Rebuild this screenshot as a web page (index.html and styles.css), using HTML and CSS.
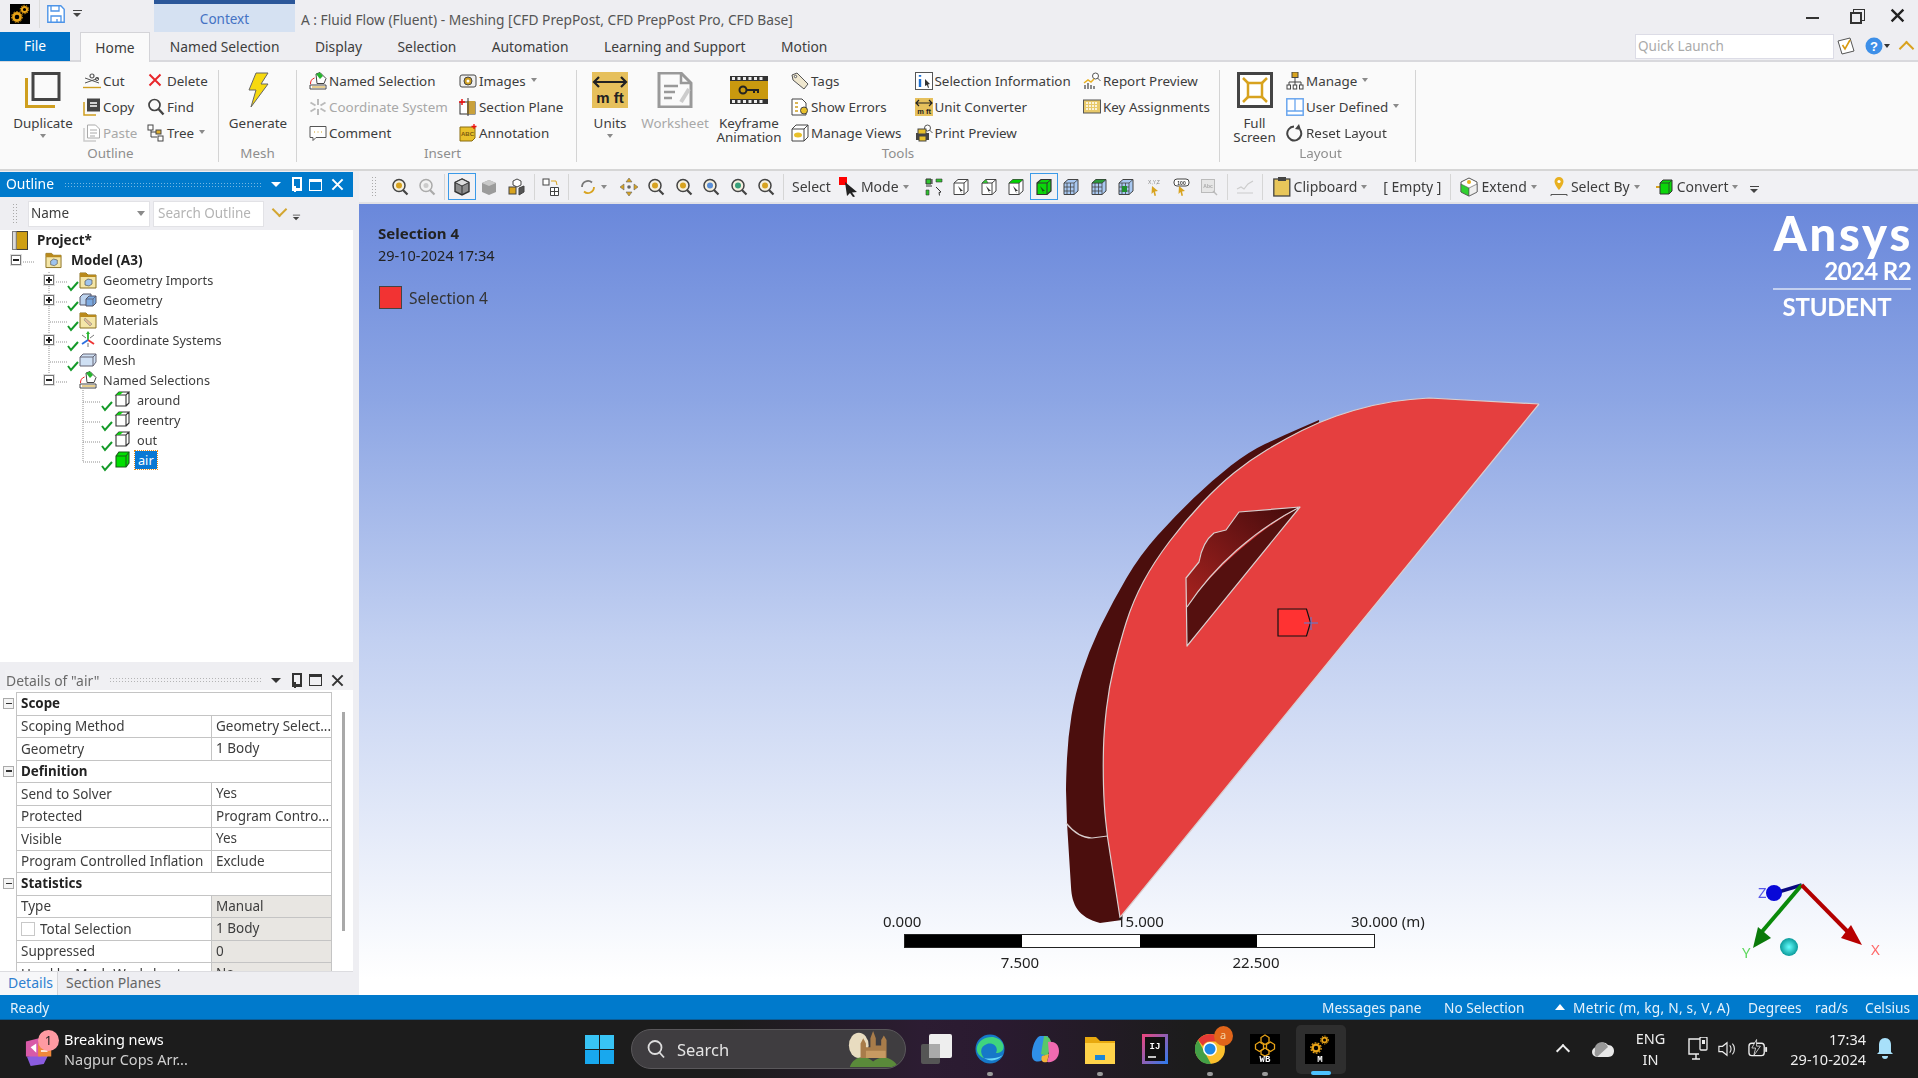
FILE: index.html
```html
<!DOCTYPE html>
<html lang="en">
<head>
<meta charset="utf-8">
<title>A : Fluid Flow (Fluent) - Meshing</title>
<link rel="stylesheet" href="styles.css">
</head>
<body>
<svg class="sprite" aria-hidden="true">
  <symbol id="xm" viewBox="0 0 14 14"><path d="M1.500 1.500l11 11M12.500 1.500l-11 11" fill="none" stroke="currentColor" stroke-width="2.200"/></symbol>
  <symbol id="gears" viewBox="0 0 20 20"><rect width="20" height="20" fill="#000"/><g fill="none" stroke="#e8a317"><circle cx="7" cy="13" r="3.600" stroke-width="2.600"/><circle cx="7" cy="13" r="5.400" stroke-width="1" stroke-dasharray="1.600 1.400"/><circle cx="14.500" cy="5.500" r="2.600" stroke-width="2"/><circle cx="14.500" cy="5.500" r="4.200" stroke-width="1" stroke-dasharray="1.400 1.200"/></g></symbol>
  <symbol id="save" viewBox="0 0 18 18"><path d="M.8.8h13l3.400 3.400v13H.8z" fill="#fff" stroke="#4d94e8" stroke-width="1.400"/><path d="M4 1v5h8V1M4 17v-6h10v6M10 14v3" fill="none" stroke="#4d94e8" stroke-width="1.300"/></symbol>
  <symbol id="dup" viewBox="0 0 36 36"><path d="M1.500 6v28.500H30" fill="none" stroke="#cf9f1f" stroke-width="3"/><rect x="8" y="1.500" width="26" height="26" fill="#fafafa" stroke="#444" stroke-width="3"/></symbol>
  <symbol id="cut" viewBox="0 0 18 18"><path d="M0 15.500h18" stroke="#cf9f1f" stroke-width="1.400"/><path d="M2 11L16 6M2 6l14 5" stroke="#555" fill="none"/><circle cx="9" cy="4" r="2" fill="none" stroke="#555" stroke-width="1.200"/><circle cx="14" cy="7" r="1.600" fill="none" stroke="#555"/></symbol>
  <symbol id="copy" viewBox="0 0 18 18"><path d="M1 4v13h12" fill="none" stroke="#cf9f1f" stroke-width="1.500"/><rect x="4" y="0.500" width="13" height="13" fill="#444"/><path d="M7 5h7M7 8h7" stroke="#fff" stroke-width="1.300"/></symbol>
  <symbol id="paste" viewBox="0 0 18 18"><path d="M1 4v13h12" fill="none" stroke="#ccc" stroke-width="1.500"/><path d="M4.500 1h8l4 4v9h-12z" fill="#fff" stroke="#aaa"/><path d="M7 6h7M7 9h7M7 12h5" stroke="#aaa"/></symbol>
  <symbol id="del" viewBox="0 0 18 18"><path d="M2.500 2.500l11 11M13.500 2.500l-11 11" stroke="#e8272b" stroke-width="2"/></symbol>
  <symbol id="find" viewBox="0 0 18 18"><circle cx="7.500" cy="7" r="5.500" fill="none" stroke="#444" stroke-width="1.700"/><path d="M11.500 11l5 5.500" stroke="#444" stroke-width="2.400"/></symbol>
  <symbol id="tree" viewBox="0 0 18 18"><path d="M4 5v8h6M4 8h6" stroke="#444" fill="none"/><rect x="1" y="1" width="5" height="5" fill="#fff" stroke="#444"/><rect x="9" y="6" width="5" height="4" fill="#e0b030" stroke="#444"/><rect x="11" y="12" width="5" height="5" fill="#fff" stroke="#444"/></symbol>
  <symbol id="bolt" viewBox="0 0 24 36"><path d="M10 1h12l-7 11h7L5 35l5-17H3z" fill="#f7d90f" stroke="#666"/></symbol>
  <symbol id="named" viewBox="0 0 18 18"><path d="M1 13h16v4H1z" fill="#fff" stroke="#444"/><path d="M3 15h13" stroke="#cf9f1f"/><path d="M7 2l4-1.500 6 6-2 5H8z" fill="#fff" stroke="#444"/><path d="M7 2l4-1.500 3 3.500-3 3z" fill="#27b52f"/><path d="M1.500 12c0-3 1-5 4-6" fill="none" stroke="#e22"/></symbol>
  <symbol id="coordg" viewBox="0 0 18 18"><g stroke="#bbb" stroke-width="2"><path d="M9 1v6M9 11v6M1.500 4.500l5 3M11.500 10.500l5 3M1.500 13.500l5-3M11.500 7.500l5-3"/></g></symbol>
  <symbol id="comment" viewBox="0 0 18 18"><path d="M1 2.500h16v11H7l-3 3v-3H1z" fill="#fff" stroke="#555"/><path d="M5 8h1M8.500 8h1M12 8h1" stroke="#cf9f1f"/></symbol>
  <symbol id="images" viewBox="0 0 18 18"><rect x="1" y="3" width="16" height="12" rx="2" fill="#eee" stroke="#444"/><circle cx="9" cy="9" r="4" fill="#cf9f1f" stroke="#444"/><circle cx="9" cy="9" r="1.500" fill="#fff"/></symbol>
  <symbol id="section" viewBox="0 0 18 18"><rect x="1" y="4" width="15" height="12" fill="#fff" stroke="#333"/><rect x="8" y="3" width="8" height="13" fill="#c9a13b"/><path d="M9 0v18" stroke="#333"/><path d="M3 1v6M0 4h6" stroke="#e11" stroke-width="1.500"/></symbol>
  <symbol id="annot" viewBox="0 0 18 18"><path d="M1 3h15v11l-3 3H1z" fill="#e8c02a" stroke="#8a6d10"/><path d="M15 0v5M12.500 2.500h5" stroke="#e11" stroke-width="1.300"/></symbol>
  <symbol id="units" viewBox="0 0 36 36"><rect width="36" height="36" fill="#e6c05c"/><path d="M2 10h32M7 5l-5 5 5 5M29 5l5 5-5 5" fill="none" stroke="#222" stroke-width="2.200"/></symbol>
  <symbol id="sheet" viewBox="0 0 36 36"><path d="M2 1h22l10 10v24H2z" fill="#fafafa" stroke="#999" stroke-width="3"/><path d="M24 1v10h10M7 14h14M7 20h11M7 26h8" fill="none" stroke="#999" stroke-width="2.500"/><path d="M24 30l8-13" stroke="#ccc" stroke-width="4"/></symbol>
  <symbol id="key" viewBox="0 0 38 28"><rect width="38" height="28" fill="#333"/><rect y="5" width="38" height="18" fill="#c9990f"/><g fill="#eee"><rect x="2" y="1" width="3" height="3"/><rect x="7.500" y="1" width="3" height="3"/><rect x="13" y="1" width="3" height="3"/><rect x="18.500" y="1" width="3" height="3"/><rect x="24" y="1" width="3" height="3"/><rect x="29.500" y="1" width="3" height="3"/><rect x="2" y="24" width="3" height="3"/><rect x="7.500" y="24" width="3" height="3"/><rect x="13" y="24" width="3" height="3"/><rect x="18.500" y="24" width="3" height="3"/><rect x="24" y="24" width="3" height="3"/><rect x="29.500" y="24" width="3" height="3"/></g><circle cx="13" cy="14" r="3.500" fill="none" stroke="#222" stroke-width="2"/><path d="M17 14h11v3M24 14v3" fill="none" stroke="#222" stroke-width="2"/></symbol>
  <symbol id="tags" viewBox="0 0 18 18"><path d="M1 3l5-2 11 11-4 5L2 8z" fill="#efe7cf" stroke="#555"/><circle cx="4.500" cy="4.500" r="1.200" fill="#fff" stroke="#555"/></symbol>
  <symbol id="errors" viewBox="0 0 18 18"><path d="M1 1h10l4 4v12H1z" fill="#fff" stroke="#444"/><path d="M4 5h3M4 9h3M4 13h3" stroke="#cf9f1f" stroke-width="1.400"/><circle cx="13" cy="12.500" r="3.500" fill="#e8c02a" stroke="#444"/></symbol>
  <symbol id="views" viewBox="0 0 18 18"><path d="M1 5l4-4h12v12l-4 4H1z" fill="#fff" stroke="#444"/><path d="M1 5h12v12M13 5l4-4" fill="none" stroke="#444"/><ellipse cx="7" cy="11" rx="4" ry="2.500" fill="#e8c02a"/></symbol>
  <symbol id="info" viewBox="0 0 18 18"><rect x=".5" y=".5" width="17" height="17" fill="#fff" stroke="#555"/><path d="M5 3v1.800M5 7v8" stroke="#1c6fd0" stroke-width="2.400"/><path d="M10 7l5 5-2 .5 1 3-1 .5-1-3-2 1z" fill="#333"/></symbol>
  <symbol id="unit" viewBox="0 0 18 18"><rect width="18" height="18" fill="#e6c05c"/><path d="M1 5h16M4 2L1 5l3 3M14 2l3 3-3 3" fill="none" stroke="#222" stroke-width="1.200"/></symbol>
  <symbol id="print" viewBox="0 0 18 18"><circle cx="12.500" cy="4" r="3" fill="#fff" stroke="#555"/><path d="M14.500 6l3 3" stroke="#555"/><rect x="1" y="9" width="13" height="7" fill="#444"/><rect x="3" y="5" width="8" height="5" fill="#e8c02a" stroke="#444"/><rect x="4" y="12" width="7" height="5" fill="#e8c02a" stroke="#444"/></symbol>
  <symbol id="report" viewBox="0 0 18 18"><circle cx="12.500" cy="4" r="3" fill="#fff" stroke="#555"/><path d="M14.500 6l3 3" stroke="#555"/><path d="M2 17v-4M5 17v-6M8 17v-4M11 17v-3" stroke="#666" stroke-width="1.500"/><path d="M1 11l4-3 3 2 3-3" fill="none" stroke="#e8b020" stroke-width="1.500"/></symbol>
  <symbol id="keys" viewBox="0 0 18 18"><rect x=".5" y="2" width="17" height="13" fill="#e8c96a" stroke="#555"/><path d="M3 5h12M3 8h12M3 11h12" stroke="#fff" stroke-width="1.500" stroke-dasharray="2 1"/></symbol>
  <symbol id="full" viewBox="0 0 36 36"><rect x="1.500" y="1.500" width="33" height="33" fill="#fff" stroke="#444" stroke-width="3"/><rect x="11" y="11" width="14" height="14" fill="none" stroke="#d8a31f" stroke-width="2.500"/><path d="M11 11L6 6M25 11l5-5M11 25l-5 5M25 25l5 5" stroke="#d8a31f" stroke-width="2.500"/></symbol>
  <symbol id="manage" viewBox="0 0 18 18"><path d="M9 5v4M3 14v-4h12v4M9 9v5" fill="none" stroke="#444"/><rect x="6" y="0" width="6" height="5.500" fill="#d8a31f" stroke="#444"/><rect x="1" y="13" width="3.500" height="4" fill="#fff" stroke="#444"/><rect x="7.200" y="13" width="3.500" height="4" fill="#fff" stroke="#444"/><rect x="13.500" y="13" width="3.500" height="4" fill="#fff" stroke="#444"/></symbol>
  <symbol id="user" viewBox="0 0 18 18"><rect x=".8" y=".8" width="16.400" height="16.400" fill="#fff" stroke="#6aa6ee" stroke-width="1.500"/><path d="M1 13h16M9 1v12" stroke="#6aa6ee" stroke-width="1.300"/></symbol>
  <symbol id="reset" viewBox="0 0 18 18"><path d="M8 2.500a7 7 0 1 0 6 3" fill="none" stroke="#444" stroke-width="2"/><path d="M13 0l2 6-6-1z" fill="#444"/></symbol>
  <symbol id="qlcheck" viewBox="0 0 18 18"><path d="M1 4l12-3 4 13-12 3z" fill="#fff" stroke="#555"/><path d="M5.500 8l2.500 4 5-9" fill="none" stroke="#d89a10" stroke-width="1.600"/></symbol>
  <symbol id="help" viewBox="0 0 18 18"><circle cx="9" cy="9" r="8.500" fill="#3d8fe8"/></symbol>

  <symbol id="mag" viewBox="0 0 18 18"><circle cx="8" cy="7.500" r="6" fill="#f5f0df" stroke="#444" stroke-width="1.500"/><circle cx="8" cy="7.500" r="3" fill="currentColor"/><path d="M12 12l4.500 4.500" stroke="#444" stroke-width="2.200"/></symbol>
  <symbol id="magg" viewBox="0 0 18 18"><circle cx="8" cy="7.500" r="6" fill="#f2f2f2" stroke="#aaa" stroke-width="1.500"/><circle cx="8" cy="7.500" r="2.500" fill="#ccc"/><path d="M12 12l4.500 4.500" stroke="#aaa" stroke-width="2.200"/></symbol>
  <symbol id="boxd" viewBox="0 0 18 18"><path d="M9 1l7 3.500v9L9 17l-7-3.500v-9z" fill="#8c8c8c" stroke="#333" stroke-width="1.400"/><path d="M2 4.500L9 8l7-3.500L9 1z" fill="#ddd" stroke="#333"/><path d="M9 8v9" stroke="#333"/></symbol>
  <symbol id="boxg" viewBox="0 0 18 18"><path d="M9 2l7 3v9l-7 3-7-3V5z" fill="#9b9b9b"/><path d="M2 5l7 3 7-3-7-3z" fill="#c9c9c9"/></symbol>
  <symbol id="multi" viewBox="0 0 18 18"><path d="M9 1l4 2v4L9 9 5 7V3z" fill="#fff" stroke="#444"/><rect x="1" y="9" width="7" height="7" fill="#d8a31f" stroke="#444"/><path d="M11 10l5-2v6l-5 3z" fill="#555" stroke="#444"/></symbol>
  <symbol id="layout" viewBox="0 0 18 18"><rect x="1" y="1" width="6" height="6" fill="#fff" stroke="#444"/><path d="M9 3h5l1 4" fill="none" stroke="#d8a31f"/><path d="M8.500 9.500h8v8h-8zM8.500 13.500h8M12.500 9.500v8" fill="#fff" stroke="#444"/></symbol>
  <symbol id="rotate" viewBox="0 0 18 18"><path d="M3 9a6 6 0 0 1 10-4.500" fill="none" stroke="#777" stroke-width="1.800"/><path d="M15 9a6 6 0 0 1-10 4.500" fill="none" stroke="#d8a31f" stroke-width="1.800"/></symbol>
  <symbol id="pan" viewBox="0 0 18 18"><g fill="#d8a31f" stroke="#666" stroke-width=".6"><path d="M9 0l3 4H6zM9 18l-3-4h6zM0 9l4-3v6zM18 9l-4 3V6z"/></g><circle cx="9" cy="9" r="1.800" fill="#666"/></symbol>
  <symbol id="points" viewBox="0 0 18 18"><path d="M1 1h5v5H1z" fill="#2fc22f" stroke="#333"/><path d="M11 1h6v3h-6zM1 12h3v5H1z" fill="#2fc22f" stroke="#333" stroke-width=".6"/><path d="M7 1v5M1 8h6M11 9l5 5-2 .5.5 3" fill="none" stroke="#333"/></symbol>
  <symbol id="cubea" viewBox="0 0 18 18"><path d="M2 5l4-3.500h10v11.500l-4 3.500H2z" fill="#fff" stroke="#444"/><path d="M2 5h10v11.500M12 5l4-3.500" fill="none" stroke="#444"/><path d="M6 8l5 5-2 0 .5 2.500" fill="#333"/></symbol>
  <symbol id="cubeb" viewBox="0 0 18 18"><use href="#cubea"/><path d="M2 5l4-3.500 2 3.500z" fill="#2fd12f" stroke="#444" stroke-width=".5"/></symbol>
  <symbol id="cubec" viewBox="0 0 18 18"><use href="#cubea"/><path d="M2 5l4-3.500h10l-4 3.500z" fill="#00d400" stroke="#444" stroke-width=".5"/></symbol>
  <symbol id="cubed" viewBox="0 0 18 18"><path d="M2 5l4-3.500h10v11.500l-4 3.500H2z" fill="#0bd60b" stroke="#333" stroke-width="1.200"/><path d="M2 5h10v11.500M12 5l4-3.500" fill="none" stroke="#333"/><path d="M5 8l5 5-2 0 .5 2.500" fill="#1a4d1a"/></symbol>
  <symbol id="cubem" viewBox="0 0 18 18"><path d="M2 5l4-3.500h10v11.500l-4 3.500H2z" fill="#a9c9f2" stroke="#444"/><path d="M2 5h10v11.500M12 5l4-3.500M5 5v12M8.500 5v12M2 9h10M2 13h10" fill="none" stroke="#444" stroke-width=".8"/></symbol>
  <symbol id="cuben" viewBox="0 0 18 18"><use href="#cubem"/><path d="M2 5l4-3.500h10l-4 3.500z" fill="#2a9a3a" stroke="#333" stroke-width=".5"/></symbol>
  <symbol id="cubeo" viewBox="0 0 18 18"><use href="#cubem"/><rect x="5" y="8" width="5" height="6" fill="#1f8f2f"/></symbol>
  <symbol id="xyz" viewBox="0 0 18 18"><path d="M7 8l6 5-3 .5 1 4-1.500 .5-1-4-2 2z" fill="#d8a31f"/></symbol>
  <symbol id="hund" viewBox="0 0 18 18"><rect x="2" y="1" width="15" height="7" rx="3" fill="#fff" stroke="#444"/><path d="M7 8l6 5-3 .5 1 4-1.500 .5-1-4-2 2z" fill="#d8a31f"/></symbol>
  <symbol id="abc" viewBox="0 0 18 18"><rect x="1.500" y="1.500" width="13" height="13" fill="#e6e6e6" stroke="#bbb"/><path d="M13 13l4 4" stroke="#bbb" stroke-width="1.500"/></symbol>
  <symbol id="chart" viewBox="0 0 18 18"><path d="M1 11l4-2 3 2 4-5 5-3M1 15h16" fill="none" stroke="#ccc" stroke-width="1.200"/></symbol>
  <symbol id="clip" viewBox="0 0 18 20"><rect x=".8" y="2" width="16" height="17" fill="#e8c65a" stroke="#444" stroke-width="1.300"/><rect x="5" y="0" width="8" height="4" fill="#444"/></symbol>
  <symbol id="cursor" viewBox="0 0 20 20"><rect x="0" y="0" width="8" height="8" fill="#f00"/><path d="M6 5l12 10-5 .5 3 4-2 .5-3-4-3 3z" fill="#222"/></symbol>
  <symbol id="extend" viewBox="0 0 18 20"><path d="M9 1l8 4v10l-8 4-8-4V5z" fill="#fff" stroke="#555"/><path d="M1 7l8 4v8l-8-4z" fill="#2fd12f" stroke="#555" stroke-width=".6"/><path d="M9 11l8-4v8l-8 4z" fill="#eee" stroke="#555" stroke-width=".6"/><circle cx="9" cy="5" r="2" fill="#e8b020"/></symbol>
  <symbol id="selby" viewBox="0 0 18 20"><path d="M9 0a4.500 4.500 0 0 1 4.500 4.500C13.500 8 9 13 9 13S4.500 8 4.500 4.500A4.500 4.500 0 0 1 9 0z" fill="#e8b020"/><circle cx="9" cy="4.500" r="1.600" fill="#fff"/><path d="M1 19v-1.500h16V19" fill="none" stroke="#555"/></symbol>
  <symbol id="conv" viewBox="0 0 18 18"><path d="M0 9h5" stroke="#d8a31f" stroke-width="2"/><path d="M4 5l3-3h9v11l-3 3H4z" fill="#0bd60b" stroke="#333"/><path d="M4 5h9v11M13 5l3-3" fill="none" stroke="#333" stroke-width=".8"/></symbol>

  <symbol id="book" viewBox="0 0 17 20"><rect x="4" y=".5" width="12.500" height="19" fill="#cf9f14" stroke="#333"/><rect x=".5" y=".5" width="4" height="19" fill="#ddd" stroke="#777"/></symbol>
  <symbol id="folder" viewBox="0 0 18 18"><path d="M1 5V2h6l2 2h8v13H1z" fill="#f4e6a8" stroke="#8a7020"/><path d="M1 2h6l2 2h8v2H1z" fill="#b98a1d"/><path d="M6 10l3-2 4 1v4l-3 2-4-1z" fill="#9fc4ee" stroke="#555" stroke-width=".7"/></symbol>
  <symbol id="foldm" viewBox="0 0 18 18"><path d="M1 5V2h6l2 2h8v13H1z" fill="#f4e6a8" stroke="#8a7020"/><path d="M1 2h6l2 2h8v2H1z" fill="#b98a1d"/><path d="M6 7l7 6-2 2-6-6z" fill="#e2bb95" stroke="#888" stroke-width=".6"/></symbol>
  <symbol id="geom" viewBox="0 0 18 16"><path d="M1 5l3-3h8v8l-3 3H1z" fill="#bcd3ee" stroke="#556"/><path d="M7 7l3-3h7v7l-3 3H7z" fill="#7ba9e0" stroke="#556"/><path d="M7 7h7v7M14 7l3-3" fill="none" stroke="#556" stroke-width=".7"/></symbol>
  <symbol id="meshi" viewBox="0 0 18 16"><path d="M1 5l3-3h13v8l-3 4H1z" fill="#cfe0f4" stroke="#667"/><path d="M1 5h13v9M14 5l3-3" fill="none" stroke="#667"/></symbol>
  <symbol id="coord" viewBox="0 0 18 18"><path d="M9 9V2" stroke="#27b52f" stroke-width="1.800"/><path d="M9 9l6 4" stroke="#e33" stroke-width="1.800"/><path d="M9 9l-6 4" stroke="#2a6fe0" stroke-width="1.800"/><path d="M3 4l4 3M15 4l-4 3M9 12v4" stroke="#777"/><path d="M9 0l2 3H7z" fill="#27b52f"/></symbol>
  <symbol id="nsel" viewBox="0 0 17 18"><path d="M3 4h10l3 -3H6zM3 4v11h10V4M13 15l3-3V1" fill="#fff" stroke="#333" stroke-width="1.100"/><path d="M3 4l3-3h4L7 4z" fill="#14c914"/></symbol>
  <symbol id="nseld" viewBox="0 0 17 18"><path d="M3 5l3-4h10v11l-3 4H3z" fill="#00e000" stroke="#1a5a1a" stroke-width="1.100"/><path d="M3 5h10v11M13 5l3-4" fill="none" stroke="#1a5a1a"/></symbol>
  <symbol id="chk" viewBox="0 0 12 20"><path d="M1 14l3 4 7-8" fill="none" stroke="#159a2a" stroke-width="2"/></symbol>

  <symbol id="news" viewBox="0 0 32 36"><path d="M2 26l24-4-6 12-14 2z" fill="#8b5ce0"/><path d="M16 2h10v16H16z" fill="#2a7de0"/><path d="M1 10l16-4v20H1z" fill="#d85aa8"/><rect x="14" y="12" width="14" height="14" fill="#f0883a"/><path d="M6 16l6-4v10z" fill="#fff"/><path d="M17 16h7M17 20h7" stroke="#fff" stroke-width="1.600"/></symbol>
  <symbol id="win" viewBox="0 0 29 29"><g fill="#38c4f5"><rect width="14" height="14"/><rect x="15" width="14" height="14"/><rect y="15" width="14" height="14" fill="#18a8ee"/><rect x="15" y="15" width="14" height="14" fill="#18a8ee"/></g></symbol>
  <symbol id="search" viewBox="0 0 20 20"><circle cx="9" cy="8.500" r="6.500" fill="none" stroke="#ddd" stroke-width="1.800"/><path d="M13.500 13.500l4.500 5" stroke="#ddd" stroke-width="1.800"/></symbol>
  <symbol id="castle" viewBox="0 0 58 40"><ellipse cx="12" cy="16" rx="11" ry="14" fill="#e8dcc0"/><path d="M2 40c4-12 18-14 26-6 6-6 20-8 28 6z" fill="#5a8a3a"/><path d="M14 30V14l3-6 3 6v4h5V8l3-8 3 8v8h6V10l3-5 3 5v20z" fill="#a87c4a"/><path d="M20 22h22v8H20z" fill="#c79a62"/></symbol>
  <symbol id="tview" viewBox="0 0 31 30"><rect y="10" width="19" height="20" rx="2" fill="#555"/><rect x="8" width="23" height="24" rx="2" fill="#eee"/><rect x="8" y="10" width="11" height="14" fill="#aaa"/></symbol>
  <symbol id="edge" viewBox="0 0 30 30"><circle cx="15" cy="15" r="14.500" fill="#1678c8"/><path d="M2 13C4 3 22-2 28 10c2 6-2 9-7 9 3-6-3-11-9-9-6 2-8 8-3 14C4 22 1 18 2 13z" fill="#3fd47e"/><path d="M9 24c6 4 14 3 19-3-6 4-15 4-19 3z" fill="#6ad8f8"/></symbol>
  <symbol id="cop" viewBox="0 0 30 30"><path d="M10 2h8l-4 22c-1 4-9 5-11 1C0 20 4 4 10 2z" fill="#2f8fe8"/><path d="M14 2c4 0 6 2 7 6l-3 14-7-2z" fill="#58c86a"/><path d="M18 8c6-1 11 2 11 9s-5 12-12 11l2-7z" fill="#f06ab0"/><path d="M12 22l7-2-2 8c-3 1-7 0-5-6z" fill="#f3b23a"/></symbol>
  <symbol id="expl" viewBox="0 0 30 30"><path d="M0 3h11l4 4h15v4H0z" fill="#e8a90f"/><path d="M0 9h30v21H0z" fill="#ffd34a"/><rect x="10" y="21" width="10" height="5" fill="#1a86d8"/></symbol>
  <symbol id="ij" viewBox="0 0 26 30"><rect width="26" height="30" fill="url(#ijg)"/><rect x="3" y="3" width="20" height="24" fill="#111"/><path d="M6 23h8" stroke="#fff" stroke-width="1.500"/></symbol>
  <linearGradient id="ijg" x1="0" y1="0" x2="1" y2="1"><stop offset="0" stop-color="#f0447a"/><stop offset="1" stop-color="#2a7cf0"/></linearGradient>
  <symbol id="chrome" viewBox="0 0 30 30"><circle cx="15" cy="15" r="15" fill="#fbc02d"/><path d="M15 0a15 15 0 0 1 13 7.500H15A7.500 7.500 0 0 0 8 12L3 6A15 15 0 0 1 15 0z" fill="#e53935"/><path d="M3 6l6.500 12L16 30A15 15 0 0 1 3 6z" fill="#43a047"/><circle cx="15" cy="15" r="7" fill="#fff"/><circle cx="15" cy="15" r="5.500" fill="#1e88e5"/></symbol>
  <symbol id="wb" viewBox="0 0 30 30"><rect width="30" height="30" fill="#000"/><g fill="none" stroke="#e8a317" stroke-width="1.300"><path d="M15 1l4 2.500v4.500l-4 2.500-4-2.500V3.500z"/><path d="M9.500 8l4 2.500V15l-4 2.500-4-2.500v-4.500z"/><path d="M20.500 8l4 2.500V15l-4 2.500-4-2.500v-4.500z"/><path d="M15 14l4 2.500V20l-4 2-4-2v-3.500z"/></g></symbol>
  <symbol id="mesh" viewBox="0 0 30 30"><rect width="30" height="30" fill="#000"/><g fill="none" stroke="#e8a317"><circle cx="11" cy="14" r="3.400" stroke-width="2.400"/><circle cx="11" cy="14" r="5.200" stroke-width="1.200" stroke-dasharray="1.800 1.400"/><circle cx="19.500" cy="6" r="2.400" stroke-width="1.800"/><circle cx="19.500" cy="6" r="4" stroke-width="1" stroke-dasharray="1.400 1.200"/></g></symbol>
  <symbol id="cloud" viewBox="0 0 24 20"><path d="M6 18a5 5 0 0 1 0-10c1-5 8-6 11-2 4 0 6 3 6 6s-2 6-6 6z" fill="#e8e8e8"/><path d="M4 12a6 6 0 0 1 13-4L6 18a5 5 0 0 1-2-6z" fill="#999"/></symbol>
  <symbol id="netw" viewBox="0 0 20 24"><path d="M12 2H1v15h10" fill="none" stroke="#eee" stroke-width="1.400"/><path d="M4 22h8M8 17v5" stroke="#eee" stroke-width="1.400"/><rect x="12" y="0" width="7" height="13" rx="1" fill="#1c1c1c" stroke="#eee" stroke-width="1.300"/><path d="M14 3h3v4h-3z" fill="#eee"/></symbol>
  <symbol id="spk" viewBox="0 0 20 20"><path d="M1 7h4l5-4v14l-5-4H1z" fill="none" stroke="#eee" stroke-width="1.300"/><path d="M13 6c2 2 2 6 0 8M16 4c3 3 3 9 0 12" fill="none" stroke="#eee" stroke-width="1.200"/></symbol>
  <symbol id="batt" viewBox="0 0 22 20"><rect x="1" y="4" width="16" height="13" rx="3" fill="none" stroke="#eee" stroke-width="1.400"/><rect x="18" y="8" width="2" height="5" fill="#eee"/><path d="M9 0L4 9h4l-2 8 7-10H9z" fill="#1c1c1c" stroke="#eee" stroke-width=".8"/></symbol>
  <symbol id="bell" viewBox="0 0 18 24"><path d="M9 1c-4 0-6 3-6 7v7l-2 2h16l-2-2V8c0-4-2-7-6-7z" fill="#a8e0fa"/><path d="M6 19h6a3 3 0 0 1-6 0z" fill="#a8e0fa"/></symbol>
</svg>

<div class="app">
  <header class="titlebar">
    <svg class="appicon"><use href="#gears"/></svg>
    <span class="tsep"></span>
    <svg class="saveicon"><use href="#save"/></svg>
    <span class="qadrop"></span>
    <div class="context">Context</div>
    <div class="title">A : Fluid Flow (Fluent) - Meshing [CFD PrepPost, CFD PrepPost Pro, CFD Base]</div>
    <div class="winctl">
      <span class="wmin"></span>
      <span class="wrest"></span>
      <svg class="wclose"><use href="#xm"/></svg>
    </div>
  </header>

  <nav class="tabs">
    <div class="tab-file">File</div>
    <div class="tab tab-on">Home</div>
    <div class="tab">Named Selection</div>
    <div class="tab">Display</div>
    <div class="tab">Selection</div>
    <div class="tab">Automation</div>
    <div class="tab">Learning and Support</div>
    <div class="tab">Motion</div>
    <div class="ql">
      <div class="ql-box">Quick Launch</div>
      <svg class="i ql-i"><use href="#qlcheck"/></svg>
      <svg class="i ql-help" viewBox="0 0 18 18"><use href="#help"/><text x="9" y="14" class="svgt13">?</text></svg>
      <span class="caret dark"></span>
      <span class="chev-up"></span>
    </div>
  </nav>

  <section class="ribbon">
    <div class="group g1">
      <div class="gbody">
        <div class="big b80"><svg class="bi"><use href="#dup"/></svg><div class="bl">Duplicate</div><span class="caret"></span></div>
        <div class="col c64">
          <div class="ri"><svg class="i"><use href="#cut"/></svg>Cut</div>
          <div class="ri"><svg class="i"><use href="#copy"/></svg>Copy</div>
          <div class="ri off"><svg class="i"><use href="#paste"/></svg>Paste</div>
        </div>
        <div class="col">
          <div class="ri"><svg class="i"><use href="#del"/></svg>Delete</div>
          <div class="ri"><svg class="i"><use href="#find"/></svg>Find</div>
          <div class="ri"><svg class="i"><use href="#tree"/></svg>Tree<span class="caret"></span></div>
        </div>
      </div>
      <div class="glabel">Outline</div>
    </div>
    <div class="group g2">
      <div class="gbody">
        <div class="big b78"><svg class="bi"><use href="#bolt"/></svg><div class="bl">Generate</div></div>
      </div>
      <div class="glabel">Mesh</div>
    </div>
    <div class="group g3">
      <div class="gbody">
        <div class="col c150">
          <div class="ri"><svg class="i"><use href="#named"/></svg>Named Selection</div>
          <div class="ri off"><svg class="i"><use href="#coordg"/></svg>Coordinate System</div>
          <div class="ri"><svg class="i"><use href="#comment"/></svg>Comment</div>
        </div>
        <div class="col">
          <div class="ri"><svg class="i"><use href="#images"/></svg>Images<span class="caret"></span></div>
          <div class="ri"><svg class="i"><use href="#section"/></svg>Section Plane</div>
          <div class="ri"><svg class="i" viewBox="0 0 18 18"><use href="#annot"/><text x="2" y="12" class="svgt5">ABC</text></svg>Annotation</div>
        </div>
      </div>
      <div class="glabel">Insert</div>
    </div>
    <div class="group g4">
      <div class="gbody">
        <div class="big b66"><svg class="bi" viewBox="0 0 36 36"><use href="#units"/><text x="18" y="31" class="svgt15">m ft</text></svg><div class="bl">Units</div><span class="caret"></span></div>
        <div class="big b64 off"><svg class="bi"><use href="#sheet"/></svg><div class="bl">Worksheet</div></div>
        <div class="big b84"><svg class="bi wide"><use href="#key"/></svg><div class="bl">Keyframe<br>Animation</div></div>
        <div class="col c123">
          <div class="ri"><svg class="i"><use href="#tags"/></svg>Tags</div>
          <div class="ri"><svg class="i"><use href="#errors"/></svg>Show Errors</div>
          <div class="ri"><svg class="i"><use href="#views"/></svg>Manage Views</div>
        </div>
        <div class="col c168">
          <div class="ri"><svg class="i"><use href="#info"/></svg>Selection Information</div>
          <div class="ri"><svg class="i" viewBox="0 0 18 18"><use href="#unit"/><text x="9" y="16" class="svgt8">m ft</text></svg>Unit Converter</div>
          <div class="ri"><svg class="i"><use href="#print"/></svg>Print Preview</div>
        </div>
        <div class="col">
          <div class="ri"><svg class="i"><use href="#report"/></svg>Report Preview</div>
          <div class="ri"><svg class="i"><use href="#keys"/></svg>Key Assignments</div>
        </div>
      </div>
      <div class="glabel">Tools</div>
    </div>
    <div class="group g5">
      <div class="gbody">
        <div class="big b65"><svg class="bi"><use href="#full"/></svg><div class="bl">Full<br>Screen</div></div>
        <div class="col col5">
          <div class="ri"><svg class="i"><use href="#manage"/></svg>Manage<span class="caret"></span></div>
          <div class="ri"><svg class="i"><use href="#user"/></svg>User Defined<span class="caret"></span></div>
          <div class="ri"><svg class="i"><use href="#reset"/></svg>Reset Layout</div>
        </div>
      </div>
      <div class="glabel gl5">Layout</div>
    </div>
  </section>

  <main class="main">
    <aside class="left">
      <div class="ph ph-blue">
        <span class="ph-t">Outline</span><span class="ph-dots"></span>
        <span class="ph-drop"></span><span class="ph-pin"></span><span class="ph-max"></span><svg class="ph-x"><use href="#xm"/></svg>
      </div>
      <div class="filter">
        <span class="grip"></span>
        <div class="fbox fname">Name<span class="caret"></span></div>
        <div class="fbox fsearch">Search Outline</div>
        <span class="chev-down"></span>
        <span class="qadrop fdrop"></span>
      </div>
      <div class="tree">
        <svg class="tlines">
          <path d="M21 32H35M49 42V152M54 52H68M54 72H68M50 92H68M54 112H68M50 132H68M54 152H68M83 160V232M83 172H100M83 192H100M83 212H100M83 232H100"/>
        </svg>
        <div class="row l0 b"><svg class="ti b16"><use href="#book"/></svg><span class="tx">Project*</span></div>
        <div class="row l1 b"><span class="exp"></span><svg class="ti mo"><use href="#folder"/></svg><span class="tx">Model (A3)</span></div>
        <div class="row l2"><span class="exp plus"></span><svg class="ck"><use href="#chk"/></svg><svg class="ti"><use href="#folder"/></svg><span class="tx">Geometry Imports</span></div>
        <div class="row l2"><span class="exp plus"></span><svg class="ck"><use href="#chk"/></svg><svg class="ti"><use href="#geom"/></svg><span class="tx">Geometry</span></div>
        <div class="row l2"><span class="exp none"></span><svg class="ck"><use href="#chk"/></svg><svg class="ti"><use href="#foldm"/></svg><span class="tx">Materials</span></div>
        <div class="row l2"><span class="exp plus"></span><svg class="ck"><use href="#chk"/></svg><svg class="ti"><use href="#coord"/></svg><span class="tx">Coordinate Systems</span></div>
        <div class="row l2"><span class="exp none"></span><svg class="ck"><use href="#chk"/></svg><svg class="ti"><use href="#meshi"/></svg><span class="tx">Mesh</span></div>
        <div class="row l2"><span class="exp"></span><span class="ck"></span><svg class="ti"><use href="#named"/></svg><span class="tx">Named Selections</span></div>
        <div class="row l3"><svg class="ck"><use href="#chk"/></svg><svg class="ti t17"><use href="#nsel"/></svg><span class="tx">around</span></div>
        <div class="row l3"><svg class="ck"><use href="#chk"/></svg><svg class="ti t17"><use href="#nsel"/></svg><span class="tx">reentry</span></div>
        <div class="row l3"><svg class="ck"><use href="#chk"/></svg><svg class="ti t17"><use href="#nsel"/></svg><span class="tx">out</span></div>
        <div class="row l3"><svg class="ck"><use href="#chk"/></svg><svg class="ti t17"><use href="#nseld"/></svg><span class="tx sel">air</span></div>
      </div>
      <div class="splitter"></div>
      <div class="ph ph-grey">
        <span class="ph-t">Details of "air"</span><span class="ph-dots"></span>
        <span class="ph-drop"></span><span class="ph-pin"></span><span class="ph-max"></span><svg class="ph-x"><use href="#xm"/></svg>
      </div>
      <div class="details">
        <div class="dt">
          <div class="dr sec"><span class="dexp"></span><div class="dc full">Scope</div></div>
          <div class="dr"><div class="dc k">Scoping Method</div><div class="dc v">Geometry Select...</div></div>
          <div class="dr"><div class="dc k">Geometry</div><div class="dc v">1 Body</div></div>
          <div class="dr sec"><span class="dexp"></span><div class="dc full">Definition</div></div>
          <div class="dr"><div class="dc k">Send to Solver</div><div class="dc v">Yes</div></div>
          <div class="dr"><div class="dc k">Protected</div><div class="dc v">Program Contro...</div></div>
          <div class="dr"><div class="dc k">Visible</div><div class="dc v">Yes</div></div>
          <div class="dr"><div class="dc k">Program Controlled Inflation</div><div class="dc v">Exclude</div></div>
          <div class="dr sec"><span class="dexp"></span><div class="dc full">Statistics</div></div>
          <div class="dr"><div class="dc k">Type</div><div class="dc v ro">Manual</div></div>
          <div class="dr"><div class="dc k"><span class="cbx"></span>Total Selection</div><div class="dc v ro">1 Body</div></div>
          <div class="dr"><div class="dc k">Suppressed</div><div class="dc v ro">0</div></div>
          <div class="dr"><div class="dc k">Used by Mesh Worksheet</div><div class="dc v ro">No</div></div>
        </div>
        <div class="scrollb"></div>
      </div>
      <div class="btabs">
        <div class="btab on">Details</div>
        <div class="btab">Section Planes</div>
      </div>
    </aside>

    <div class="right">
      <div class="toolbar">
        <span class="grip tgrip"></span>
        <span class="ic c-gold"><svg class="i"><use href="#mag"/></svg></span>
        <span class="ic"><svg class="i"><use href="#magg"/></svg></span>
        <span class="tsp"></span>
        <span class="ic on"><svg class="i"><use href="#boxd"/></svg></span>
        <span class="ic"><svg class="i"><use href="#boxg"/></svg></span>
        <span class="ic"><svg class="i"><use href="#multi"/></svg></span>
        <span class="tsp"></span>
        <span class="ic"><svg class="i"><use href="#layout"/></svg></span>
        <span class="tsp"></span>
        <span class="ic ic-s"><svg class="i"><use href="#rotate"/></svg></span><span class="caret tc"></span>
        <span class="ic"><svg class="i"><use href="#pan"/></svg></span>
        <span class="ic c-gold"><svg class="i"><use href="#mag"/></svg></span>
        <span class="ic c-gold"><svg class="i"><use href="#mag"/></svg></span>
        <span class="ic c-blue"><svg class="i"><use href="#mag"/></svg></span>
        <span class="ic c-teal"><svg class="i"><use href="#mag"/></svg></span>
        <span class="ic c-gold"><svg class="i"><use href="#mag"/></svg></span>
        <span class="tsp"></span>
        <span class="tt tselect">Select</span>
        <svg class="i cur"><use href="#cursor"/></svg>
        <span class="tt">Mode</span><span class="caret tc2"></span>
        <span class="ic ic-m"><svg class="i"><use href="#points"/></svg></span>
        <span class="ic"><svg class="i"><use href="#cubea"/></svg></span>
        <span class="ic"><svg class="i"><use href="#cubeb"/></svg></span>
        <span class="ic"><svg class="i"><use href="#cubec"/></svg></span>
        <span class="ic on"><svg class="i"><use href="#cubed"/></svg></span>
        <span class="ic"><svg class="i"><use href="#cubem"/></svg></span>
        <span class="ic"><svg class="i"><use href="#cuben"/></svg></span>
        <span class="ic"><svg class="i"><use href="#cubeo"/></svg></span>
        <span class="ic"><svg class="i" viewBox="0 0 18 18"><use href="#xyz"/><text x="9" y="6" class="svgt6g">X,Y,Z</text></svg></span>
        <span class="ic"><svg class="i" viewBox="0 0 18 18"><use href="#hund"/><text x="9.500" y="6.500" class="svgt5d">100</text></svg></span>
        <span class="ic"><svg class="i" viewBox="0 0 18 18"><use href="#abc"/><text x="8" y="10" class="svgt5g">Abc</text></svg></span>
        <span class="tsp ts4"></span>
        <span class="ic ic-c"><svg class="i"><use href="#chart"/></svg></span>
        <span class="tsp ts2"></span>
        <svg class="i clip"><use href="#clip"/></svg>
        <span class="tt">Clipboard</span><span class="caret tc2"></span>
        <span class="tt empty">[ Empty ]</span>
        <span class="tsp ts3"></span>
        <svg class="i ext"><use href="#extend"/></svg>
        <span class="tt">Extend</span><span class="caret tc2"></span>
        <svg class="i ext2"><use href="#selby"/></svg>
        <span class="tt">Select By</span><span class="caret tc2"></span>
        <svg class="i ext3"><use href="#conv"/></svg>
        <span class="tt">Convert</span><span class="caret tc2"></span>
        <span class="qadrop tdrop"></span>
      </div>

      <div class="viewport">
        <svg class="geo" viewBox="359 204 1559 790">
          <defs>
            <linearGradient id="holeg" x1="0" y1="1" x2="1" y2="0"><stop offset="0" stop-color="#a8231f"/><stop offset=".6" stop-color="#6a1414"/><stop offset="1" stop-color="#430b0b"/></linearGradient>
            <radialGradient id="sph"><stop offset="0" stop-color="#6ff"/><stop offset="1" stop-color="#0a9a9a"/></radialGradient>
          </defs>
          <path class="dark" d="M1319 420L1299.500 428.500Q1280 437 1265 444Q1250 451 1231 465.500Q1212.500 480 1193.700 498Q1175 516 1157.500 535.500Q1140 555 1126.500 578Q1113 601 1101.500 624.500Q1090 648 1082.500 671Q1075 694 1071.500 715.500Q1068 737 1067 758.500Q1066 780 1066 790L1067 823L1071 887C1072 905 1078 917 1100 923L1122 920L1150 700L1320 440z"/>
          <path class="face" d="M1539 404L1429 398L1410.300 399.500Q1391.600 401 1372.600 405.500Q1353.700 410 1336.400 416Q1319 422 1302 430.500Q1285 439 1267.500 449.500Q1250 460 1234.500 472.500Q1219 485 1202 503Q1185 521 1169.500 541.500Q1154 562 1143.500 581.500Q1133 601 1126.200 622.500Q1119.500 644 1114.200 665.500Q1109 687 1106.500 708.500Q1104 730 1103.500 748Q1103 766 1103.500 785.500Q1104 805 1105.700 821L1107.500 837L1120 917.500z"/>
          <path class="holeb" d="M1187 646L1186.500 606C1210 575 1250 535 1300 507z"/>
          <path class="holeu" d="M1186 578L1199 562C1201 550 1205 540 1214 533L1226 530L1239 512L1300 507C1255 530 1215 565 1187 607z"/>
          <path class="edge" d="M1239 512L1300 507L1187 646L1186 578L1199 562C1201 550 1205 540 1214 533L1226 530zM1298 508C1255 530 1215 565 1187 607M1066 823C1075 834 1085 838 1092 838L1107.500 836"/>
          <path class="rim" d="M1539 404L1429 398L1410.300 399.500Q1391.600 401 1372.600 405.500Q1353.700 410 1336.400 416Q1319 422 1302 430.500Q1285 439 1267.500 449.500Q1250 460 1234.500 472.500Q1219 485 1202 503Q1185 521 1169.500 541.500Q1154 562 1143.500 581.500Q1133 601 1126.200 622.500Q1119.500 644 1114.200 665.500Q1109 687 1106.500 708.500Q1104 730 1103.500 748Q1103 766 1103.500 785.500Q1104 805 1105.700 821L1107.500 837L1120 917.500L1539 404"/>
          <path class="marker" d="M1278 609H1306.500L1310.500 622.500L1306.500 636H1278z"/>
          <path class="cross" d="M1304 623H1318M1311 617V630"/>
          <g class="triad">
            <path d="M1801.700 885L1775 893" stroke="#0a0a80" stroke-width="3.500"/>
            <circle cx="1774" cy="893" r="8" fill="#0808d8"/>
            <path d="M1801.700 885L1760 934" stroke="#0a8a0a" stroke-width="4"/>
            <path d="M1753 948L1758 927L1771 938z" fill="#0a7a0a"/>
            <path d="M1801.700 885L1848 932" stroke="#b30000" stroke-width="4"/>
            <path d="M1862 945L1851 925L1841 938z" fill="#b80000"/>
            <circle cx="1789" cy="947" r="9" fill="url(#sph)"/>
            <text x="1758" y="898" class="tz">Z</text>
            <text x="1742" y="958" class="ty">Y</text>
            <text x="1871" y="955" class="tx3">X</text>
          </g>
        </svg>
        <div class="legend">
          <div class="l-title">Selection 4</div>
          <div class="l-date">29-10-2024 17:34</div>
          <div class="l-item"><span class="l-swatch"></span>Selection 4</div>
        </div>
        <div class="logo">
          <div class="logo-a">Ansys</div>
          <div class="logo-r">2024 R2</div>
          <div class="logo-s">STUDENT</div>
        </div>
        <div class="scale">
          <div class="s-top"><span>0.000</span><span>15.000</span><span>30.000 (m)</span></div>
          <div class="s-bar"><span></span><span></span><span></span><span></span></div>
          <div class="s-bot"><span>7.500</span><span>22.500</span></div>
        </div>
      </div>
    </div>
  </main>

  <footer class="status">
    <span class="st-ready">Ready</span>
    <div class="st-r">
      <span class="st1">Messages pane</span>
      <span class="st2">No Selection</span>
      <span class="st3"></span>
      <span class="st4">Metric (m, kg, N, s, V, A)</span>
      <span class="st5">Degrees</span>
      <span class="st6">rad/s</span>
      <span>Celsius</span>
    </div>
  </footer>

  <div class="taskbar">
    <div class="widget">
      <div class="w-ic"><svg class="news"><use href="#news"/></svg><span class="badge">1</span></div>
      <div class="w-tx"><div>Breaking news</div><div class="w-sub">Nagpur Cops Arr...</div></div>
    </div>
    <svg class="winl"><use href="#win"/></svg>
    <div class="pill"><svg class="p-s"><use href="#search"/></svg><span class="p-t">Search</span><svg class="p-c"><use href="#castle"/></svg></div>
    <svg class="tv"><use href="#tview"/></svg>
    <div class="apps">
      <div class="app-i dot"><svg class="ai"><use href="#edge"/></svg></div>
      <div class="app-i"><svg class="ai"><use href="#cop"/></svg></div>
      <div class="app-i dot"><svg class="ai"><use href="#expl"/></svg></div>
      <div class="app-i"><svg class="ai" viewBox="0 0 26 30"><use href="#ij"/><text x="13" y="15" class="svgt10w">IJ</text></svg></div>
      <div class="app-i dot"><svg class="ai"><use href="#chrome"/></svg><span class="a-b">a</span></div>
      <div class="app-i dot"><svg class="ai" viewBox="0 0 30 30"><use href="#wb"/><text x="15" y="28" class="svgt10w">WB</text></svg></div>
      <div class="app-i act"><svg class="ai" viewBox="0 0 30 30"><use href="#mesh"/><text x="15" y="28" class="svgt10w">M</text></svg></div>
    </div>
    <div class="tray">
      <span class="t-up"></span>
      <svg class="t-cloud"><use href="#cloud"/></svg>
      <div class="t-lang"><div>ENG</div><div>IN</div></div>
      <svg class="t-net"><use href="#netw"/></svg>
      <svg class="t-spk"><use href="#spk"/></svg>
      <svg class="t-bat"><use href="#batt"/></svg>
      <div class="t-clock"><div>17:34</div><div>29-10-2024</div></div>
      <svg class="t-bell"><use href="#bell"/></svg>
    </div>
  </div>
</div>
</body>
</html>
```

FILE: styles.css
```css
* { box-sizing: border-box; }
html, body { margin: 0; padding: 0; }
body { width: 1918px; height: 1078px; overflow: hidden; font-family: "Noto Sans", "Open Sans", sans-serif; font-size: 13.400px; color: #3d3d3d; background: #eeeef2; }
.sprite { position: absolute; width: 0; height: 0; }
.app { display: flex; flex-direction: column; height: 1078px; filter: blur(.35px); }

/* svg inner text */
.svgt5 { font: bold 6px "Liberation Sans", sans-serif; fill: #7a5a10; }
.svgt5d { font: bold 5px "Liberation Sans", sans-serif; fill: #333; text-anchor: middle; }
.svgt5g { font: bold 5px "Liberation Sans", sans-serif; fill: #aaa; text-anchor: middle; }
.svgt6g { font: 5px "Liberation Sans", sans-serif; fill: #888; text-anchor: middle; }
.svgt8 { font: bold 7.500px "Liberation Sans", sans-serif; fill: #222; text-anchor: middle; }
.svgt10w { font: bold 9px "Liberation Mono", monospace; fill: #fff; text-anchor: middle; }
.svgt13 { font: bold 13px "Liberation Sans", sans-serif; fill: #fff; text-anchor: middle; }
.svgt15 { font: bold 15px "Liberation Sans", sans-serif; fill: #222; text-anchor: middle; }

.i { width: 18px; height: 18px; flex: none; }

/* caret */
.caret { display: inline-block; width: 0; height: 0; border-top: 4px solid #8a8a8a; border-left: 3.500px solid transparent; border-right: 3.500px solid transparent; margin-left: 3px; flex: none; }
.caret.dark { border-top-color: #333; }

/* title bar */
.titlebar { height: 32px; display: flex; align-items: center; flex: none; padding-left: 10px; background: #eeeef2; }
.appicon { width: 20px; height: 20px; margin-top: -4px; }
.tsep { width: 1px; height: 28px; background: #dcdcdc; margin: 0 7px 0 9px; align-self: flex-start; }
.saveicon { width: 18px; height: 18px; margin-top: -4px; }
.qadrop { width: 9px; height: 7px; margin: -6px 0 0 8px; border-top: 1.500px solid #444; position: relative; flex: none; }
.qadrop::after { content: ""; position: absolute; left: 0; top: 2px; border-top: 4.500px solid #444; border-left: 4.500px solid transparent; border-right: 4.500px solid transparent; }
.context { width: 141px; height: 32px; margin-left: 72px; background: #d5e1f2; border-top: 4px solid #2b579a; color: #4472c4; text-align: center; line-height: 30px; font-size: 13.500px; flex: none; }
.title { margin-left: 6px; font-size: 13.750px; color: #555; white-space: nowrap; margin-top: 6px; }
.winctl { margin-left: auto; display: flex; align-items: center; height: 32px; }
.wmin { width: 13px; height: 2.500px; background: #333; margin-right: 31px; margin-top: 4px; }
.wrest { width: 12px; height: 12px; border: 2px solid #333; margin-right: 28px; margin-top: 4px; box-shadow: 3px -3px 0 -1px #eeeef2, 3px -3px 0 0 #333; }
.wclose { width: 15px; height: 15px; color: #222; margin: -1px 13px 0 0; }

/* tabs */
.tabs { height: 30px; display: flex; flex: none; align-items: stretch; background: #eeeef2; border-bottom: 2px solid #d9d9dd; font-size: 13.800px; }
.tab-file { width: 70px; background: #0072c6; color: #fff; text-align: center; line-height: 28px; height: 29px; margin-right: 10px; }
.tab { padding: 0 17.750px; line-height: 30px; color: #3d3d3d; white-space: nowrap; }
.tab-on { width: 70px; padding: 0; margin-right: 2px; text-align: center; background: #fafafa; border: 1.500px solid #d4d4d8; border-bottom: none; height: 30px; line-height: 30px; }
.ql { margin-left: auto; display: flex; align-items: center; }
.ql-box { width: 199px; height: 25px; background: #fff; border: 1.500px solid #dcdce6; color: #aaa; padding-left: 2px; line-height: 22px; font-size: 13.500px; }
.ql-i { margin: 0 10px 0 3px; }
.ql .caret { margin: 0 0 0 1px; }
.chev-up { width: 11px; height: 11px; border-left: 2.500px solid #d9a21e; border-top: 2.500px solid #d9a21e; transform: rotate(45deg); margin: 5px 6px 0 11px; }

/* ribbon */
.ribbon { height: 109px; padding-top: 8px; background: #fafafa; display: flex; flex: none; border-bottom: 2px solid #d6d6d6; }
.group { height: 92px; display: flex; flex-direction: column; border-right: 1px solid #d4d4d4; flex: none; }
.g1 { width: 219px; padding-left: 3px; }
.g2 { width: 78px; }
.g3 { width: 280px; padding-left: 12px; }
.g4 { width: 643px; }
.g5 { width: 196px; }
.gbody { flex: 1; display: flex; min-height: 0; }
.glabel { height: 16px; line-height: 14px; text-align: center; color: #8e8e8e; font-size: 13.400px; }
.gl5 { margin-left: 6px; }
.col { display: flex; flex-direction: column; margin-top: -2px; flex: none; }
.col5 { margin-left: -3px; }
.c64 { width: 64px; }
.c150 { width: 150px; }
.c123 { width: 123.500px; }
.c168 { width: 168.500px; }
.ri { height: 26.300px; display: flex; align-items: center; gap: 2px; white-space: nowrap; }
.ri .caret { margin-top: -3px; }
.off { color: #a8a8a8; }
.big { display: flex; flex-direction: column; align-items: center; flex: none; padding-top: 2px; }
.b80 { width: 80px; }
.b78 { width: 78px; }
.b66 { width: 66px; }
.b64 { width: 64px; }
.b84 { width: 84px; }
.b65 { width: 69px; }
.bi { width: 36px; height: 36px; flex: none; }
.bi.wide { width: 38px; }
.bl { margin-top: 8px; line-height: 14px; text-align: center; white-space: nowrap; }
.big .caret { margin: 4px 0 0; }

/* main area */
.main { flex: 1; display: flex; min-height: 0; }
.left { width: 359px; padding-right: 6px; display: flex; flex-direction: column; flex: none; padding-top: 1px; }
.ph { height: 25px; display: flex; align-items: center; padding-left: 6px; flex: none; }
.ph-blue { background: #007acc; color: #fff; }
.ph-blue .ph-t { margin-top: -2px; }
.ph-grey { height: 20px; background: #f0f0f3; color: #6a6a6a; margin-left: 5px; padding-left: 1px; }
.ph-t { font-size: 13.900px; white-space: nowrap; }
.ph-dots { flex: 1; height: 6px; margin: 0 10px; background-image: radial-gradient(currentColor .6px, transparent .7px); background-size: 3px 3px; opacity: .45; }
.ph-drop { border-top: 5px solid currentColor; border-left: 5px solid transparent; border-right: 5px solid transparent; margin-right: 10px; flex: none; }
.ph-grey .ph-drop { border-top-color: #333; }
.ph-pin { width: 8px; height: 15px; margin-right: 10px; position: relative; flex: none; }
.ph-pin::before { content: ""; position: absolute; left: 1px; top: 0; width: 6px; height: 9px; border: 2px solid currentColor; border-bottom-width: 3px; }
.ph-pin::after { content: ""; position: absolute; left: 3px; top: 9px; width: 2px; height: 6px; background: currentColor; }
.ph-max { width: 13px; height: 12px; border: 1.800px solid currentColor; border-top-width: 3px; margin-right: 9px; flex: none; }
.ph-x { width: 13px; height: 13px; margin-right: 9px; flex: none; color: #fff; }
.ph-grey .ph-pin, .ph-grey .ph-max, .ph-grey .ph-x { color: #333; }

.filter { height: 33px; display: flex; align-items: center; flex: none; background: #eeeef2; }
.grip { width: 6px; height: 22px; background-image: radial-gradient(#aaa .7px, transparent .8px); background-size: 3px 3px; flex: none; }
.filter .grip { margin: 0 10px 0 12px; }
.fbox { height: 26px; background: #fff; line-height: 25px; font-size: 13.500px; border: 1px solid #e2e2e6; padding-left: 2px; display: flex; align-items: center; }
.fname { width: 122px; margin-right: 3px; }
.fname .caret { margin-left: auto; margin-right: 4px; border-top-width: 5px; border-left-width: 4.500px; border-right-width: 4.500px; }
.fsearch { width: 111px; color: #b4b4b4; padding-left: 4px; }
.chev-down { width: 11px; height: 11px; border-right: 2.500px solid #d3a632; border-bottom: 2.500px solid #d3a632; transform: rotate(45deg); margin: -8px 0 0 10px; }
.fdrop { margin: 8px 0 0 7px; transform: scale(.8); }

.tree { flex: 1; background: #fff; position: relative; min-height: 0; }
.tlines { position: absolute; left: 0; top: 0; width: 353px; height: 260px; fill: none; stroke: #8f8f8f; stroke-dasharray: 1 1; }
.row { height: 20px; display: flex; align-items: center; position: relative; white-space: nowrap; }
.b .tx { font-weight: 700; color: #222; font-size: 13.500px; }
.l0 { padding-left: 12px; }
.l1 { padding-left: 11px; }
.l2 { padding-left: 44px; }
.l3 { padding-left: 101px; }
.exp { width: 10px; height: 10px; border: 1px solid #777; background: #fff; position: relative; flex: none; box-shadow: 0 0 0 1px #ddd; }
.exp::before { content: ""; position: absolute; left: 1px; top: 3px; width: 6px; height: 2px; background: #222; }
.exp.plus::after { content: ""; position: absolute; left: 3px; top: 1px; width: 2px; height: 6px; background: #222; }
.exp.none { visibility: hidden; }
.ti { width: 18px; height: 18px; flex: none; }
.ti.b16 { width: 16px; height: 19px; }
.ti.mo { margin-left: 24px; width: 17px; }
.ti.t17 { width: 17px; }
.ck { width: 12px; height: 20px; flex: none; margin-left: 13px; margin-top: 4px; }
.l3 .ck { margin-left: 0; }
.tx { margin-left: 6px; font-size: 12.700px; }
.l0 .tx { margin-left: 9px; }
.l1 .tx { margin-left: 9px; }
.l3 .tx { margin-left: 7px; }
.tx.sel { background: #0a78d4; color: #fff; outline: 1px dotted #e98a15; padding: 0 3px; margin-left: 5px; line-height: 18px; }

.splitter { height: 8px; background: #eeeef2; flex: none; }

.details { height: 281px; background: #fff; position: relative; overflow: hidden; flex: none; }
.dt { width: 332px; padding-top: 2px; display: grid; grid-auto-rows: 22.500px; }
.dr { display: flex; margin-left: 17px; position: relative; }
.dc { border: 1px solid #c4c4c4; margin: 0 0 -1px -1px; padding-left: 4px; line-height: 20px; white-space: nowrap; overflow: hidden; font-size: 13.500px; color: #3d3d3d; }
.dc.k { width: 196px; display: flex; align-items: center; }
.dc.v { flex: 1; padding-left: 4px; }
.dc.ro { background: #e8e6e2; }
.dc.full { flex: 1; font-weight: 700; color: #222; font-size: 13.400px; }
.dexp { position: absolute; left: -14px; top: 6px; width: 11px; height: 11px; background: #f4f4f4; border: 1px solid #aaa; }
.dexp::before { content: ""; position: absolute; left: 1.500px; top: 3.500px; width: 6px; height: 1.500px; background: #333; }
.cbx { width: 14px; height: 14px; border: 1px solid #c8c8c8; margin-right: 5px; flex: none; }
.scrollb { position: absolute; left: 342px; top: 22px; width: 3px; height: 219px; background: #a9a9a9; }
.btabs { height: 24px; background: #eeeef2; display: flex; flex: none; border-top: 1px solid #dcdce0; font-size: 14px; position: relative; }
.btab { padding: 0 8px; line-height: 22px; color: #666; }
.btab.on { width: 58px; background: #f7f7f9; color: #2f7fd0; border-right: 1px solid #d4d4d8; }

.right { flex: 1; display: flex; flex-direction: column; min-width: 0; }
.toolbar { height: 33px; display: flex; align-items: center; padding-left: 12px; background: #f1f1f4; border-bottom: 2px solid #e2e2e6; flex: none; white-space: nowrap; }
.tgrip { margin-right: 9px; }
.ic { width: 27.500px; height: 27px; display: flex; align-items: center; justify-content: center; flex: none; }
.ic.on { border: 1.500px solid #3b9ae8; }
.c-gold { color: #d8a31f; }
.c-blue { color: #5a8fd8; }
.c-teal { color: #3aa07a; }
.ic-s { margin-left: 2px; width: 27px; }
.ic-m { margin-left: 11.500px; }
.ic-c { width: 30px; }
.tc { margin: 0 8px 0 0; }
.tc2 { margin: 0 0 0 4px; }
.tsp { width: 1px; height: 26px; background: #d6d6d6; margin: 0 3px; flex: none; }
.ts2 { margin: 0 2px 0 2px; }
.ts3 { margin: 0 9px 0 9px; }
.ts4 { margin: 0 2px 0 4px; }
.tt { font-size: 14px; color: #3d3d3d; }
.tselect { margin: 0 8px 0 5px; }
.cur { width: 20px; height: 20px; margin-right: 2px; }
.clip { height: 20px; margin: 0 3px 0 8px; }
.empty { margin-left: 16px; }
.ext { height: 20px; margin: 0 3px 0 0; }
.ext2 { height: 20px; margin: 0 3px 0 13px; }
.ext3 { height: 20px; margin: 0 3px 0 16px; }
.tdrop { margin: 6px 0 0 12px; }

.viewport { flex: 1; position: relative; background: linear-gradient(#6a88db 0%, #8da6e4 25%, #c2d0f1 55%, #fff 98%); overflow: hidden; min-height: 0; }
.geo { position: absolute; left: 0; top: 0; width: 1559px; height: 790px; }
.dark { fill: #4b0e0d; }
.face { fill: #e53f3f; }
.holeb { fill: #55100f; }
.holeu { fill: url(#holeg); }
.edge, .rim { fill: none; stroke: #d9cfcf; stroke-width: 1.200px; stroke-linejoin: round; }
.marker { fill: #ff3232; stroke: #111; stroke-width: 1.200px; }
.cross { stroke: #5a80d8; fill: none; }
.triad { fill: none; }
.tz { font: 15px "Noto Sans", sans-serif; fill: #5a5ae8; }
.ty { font: 15px "Noto Sans", sans-serif; fill: #5fd85f; }
.tx3 { font: 15px "Noto Sans", sans-serif; fill: #ff6a6a; }

.legend { position: absolute; left: 19px; top: 18px; color: #222; }
.l-title { font-weight: 700; font-size: 15px; line-height: 22px; }
.l-date { font-size: 14.500px; line-height: 22px; }
.l-item { display: flex; align-items: center; margin-top: 20px; font-size: 15.500px; color: #333; }
.l-swatch { width: 23px; height: 23px; background: #f23333; border: 1px solid #444; margin: 0 7px 0 1px; }

.logo { position: absolute; right: 7px; top: 4px; width: 138px; color: #fff; text-align: right; font-family: Lato, sans-serif; font-weight: 700; }
.logo-a { font-size: 47px; line-height: 50px; font-weight: 900; white-space: nowrap; letter-spacing: 2.800px; margin-right: -2px; }
.logo-r { font-size: 24px; line-height: 26px; letter-spacing: -.6px; padding-bottom: 4px; border-bottom: 2px solid #c3d0f0; }
.logo-s { font-size: 24px; line-height: 34px; text-align: center; letter-spacing: -.2px; padding-right: 10px; }

.scale { position: absolute; left: 545px; top: 707px; width: 471px; font-size: 15px; color: #222; }
.s-top { position: relative; height: 23px; }
.s-top span { position: absolute; top: 0; white-space: nowrap; }
.s-top span:nth-child(1) { left: -21px; }
.s-top span:nth-child(2) { left: 213px; }
.s-top span:nth-child(3) { left: 447px; }
.s-bar { display: flex; height: 14px; border: 1px solid #222; }
.s-bar span { flex: 1; background: #000; }
.s-bar span:nth-child(even) { background: #fff; }
.s-bot { position: relative; height: 24px; }
.s-bot span { position: absolute; top: 4px; white-space: nowrap; transform: translateX(-50%); }
.s-bot span:nth-child(1) { left: 116px; }
.s-bot span:nth-child(2) { left: 352px; }

/* status */
.status { height: 25px; background: #007acc; color: #e6f2fb; display: flex; align-items: center; flex: none; font-size: 13.700px; border-bottom: 1px solid #0a5c96; white-space: nowrap; }
.st-ready { padding-left: 10px; }
.st-r { margin-left: auto; display: flex; align-items: center; width: 596px; }
.st1 { width: 122px; }
.st2 { width: 111px; }
.st3 { width: 18px; }
.st3::before { content: ""; display: block; width: 0; height: 0; border-bottom: 6px solid #fff; border-left: 5px solid transparent; border-right: 5px solid transparent; }
.st4 { width: 175px; letter-spacing: .25px; }
.st5 { width: 67px; }
.st6 { width: 50px; }

/* taskbar */
.taskbar { height: 58px; flex: none; display: flex; align-items: center; padding-left: 25px; color: #fff; background: linear-gradient(90deg, #1c1c1c 0%, #1c1c1c 38%, #2c1c32 48%, #2a1a30 52%, #1c1c1c 62%, #1c1c1c 100%); }
.widget { width: 560px; display: flex; align-items: center; flex: none; }
.w-ic { width: 30px; height: 36px; position: relative; flex: none; margin-right: 9px; }
.news { width: 30px; height: 36px; }
.badge { position: absolute; left: 13px; top: -1px; width: 21px; height: 21px; border-radius: 50%; background: #ff9aa2; color: #222; text-align: center; line-height: 21px; font-size: 13px; }
.w-tx { font-size: 14.500px; line-height: 20px; white-space: nowrap; }
.w-sub { color: #cfcfcf; }
.winl { width: 29px; height: 29px; margin-right: 17px; flex: none; }
.pill { width: 275px; height: 40px; border-radius: 20px; background: #3f3d40; border: 1px solid #5a585b; display: flex; align-items: center; padding-left: 14px; flex: none; overflow: hidden; }
.p-s { width: 20px; height: 20px; }
.p-t { margin-left: 11px; font-size: 16.500px; color: #e4e4e4; }
.p-c { width: 52px; height: 36px; margin-left: auto; margin-right: 5px; }
.tv { width: 31px; height: 30px; margin: 0 10.500px 0 15px; flex: none; }
.apps { display: flex; flex: none; }
.app-i { width: 55px; height: 58px; display: flex; align-items: center; justify-content: center; position: relative; }
.ai { width: 30px; height: 30px; }
.dot::after { content: ""; position: absolute; left: 24px; bottom: 2px; width: 6px; height: 4px; border-radius: 2px; background: #9a9a9a; }
.act::before { content: ""; position: absolute; left: 3px; top: 5px; width: 50px; height: 49px; background: #2e2e2e; border-radius: 5px; }
.act .ai { position: relative; }
.act::after { content: ""; position: absolute; left: 18px; bottom: 3px; width: 20px; height: 4px; border-radius: 2px; background: #4cc2ff; }
.a-b { position: absolute; left: 31px; top: 6px; width: 19px; height: 20px; border-radius: 50%; background: #e0651a; color: #f5d8a8; text-align: center; font-size: 11px; line-height: 18px; }
.tray { margin-left: auto; display: flex; align-items: center; padding-right: 24px; font-size: 14.500px; color: #eee; }
.t-up { width: 10px; height: 10px; border-left: 2px solid #eee; border-top: 2px solid #eee; transform: rotate(45deg); margin: 4px 23px 0 0; }
.t-cloud { width: 24px; height: 20px; margin-right: 21px; }
.t-lang { width: 30px; text-align: center; line-height: 21px; margin-right: 22px; }
.t-net { width: 20px; height: 24px; margin-right: 10px; }
.t-spk { width: 18px; height: 18px; margin-right: 12px; }
.t-bat { width: 21px; height: 20px; }
.t-clock { width: 97.500px; text-align: right; line-height: 20px; white-space: nowrap; margin-right: 10px; }
.t-bell { width: 18px; height: 24px; }
```
